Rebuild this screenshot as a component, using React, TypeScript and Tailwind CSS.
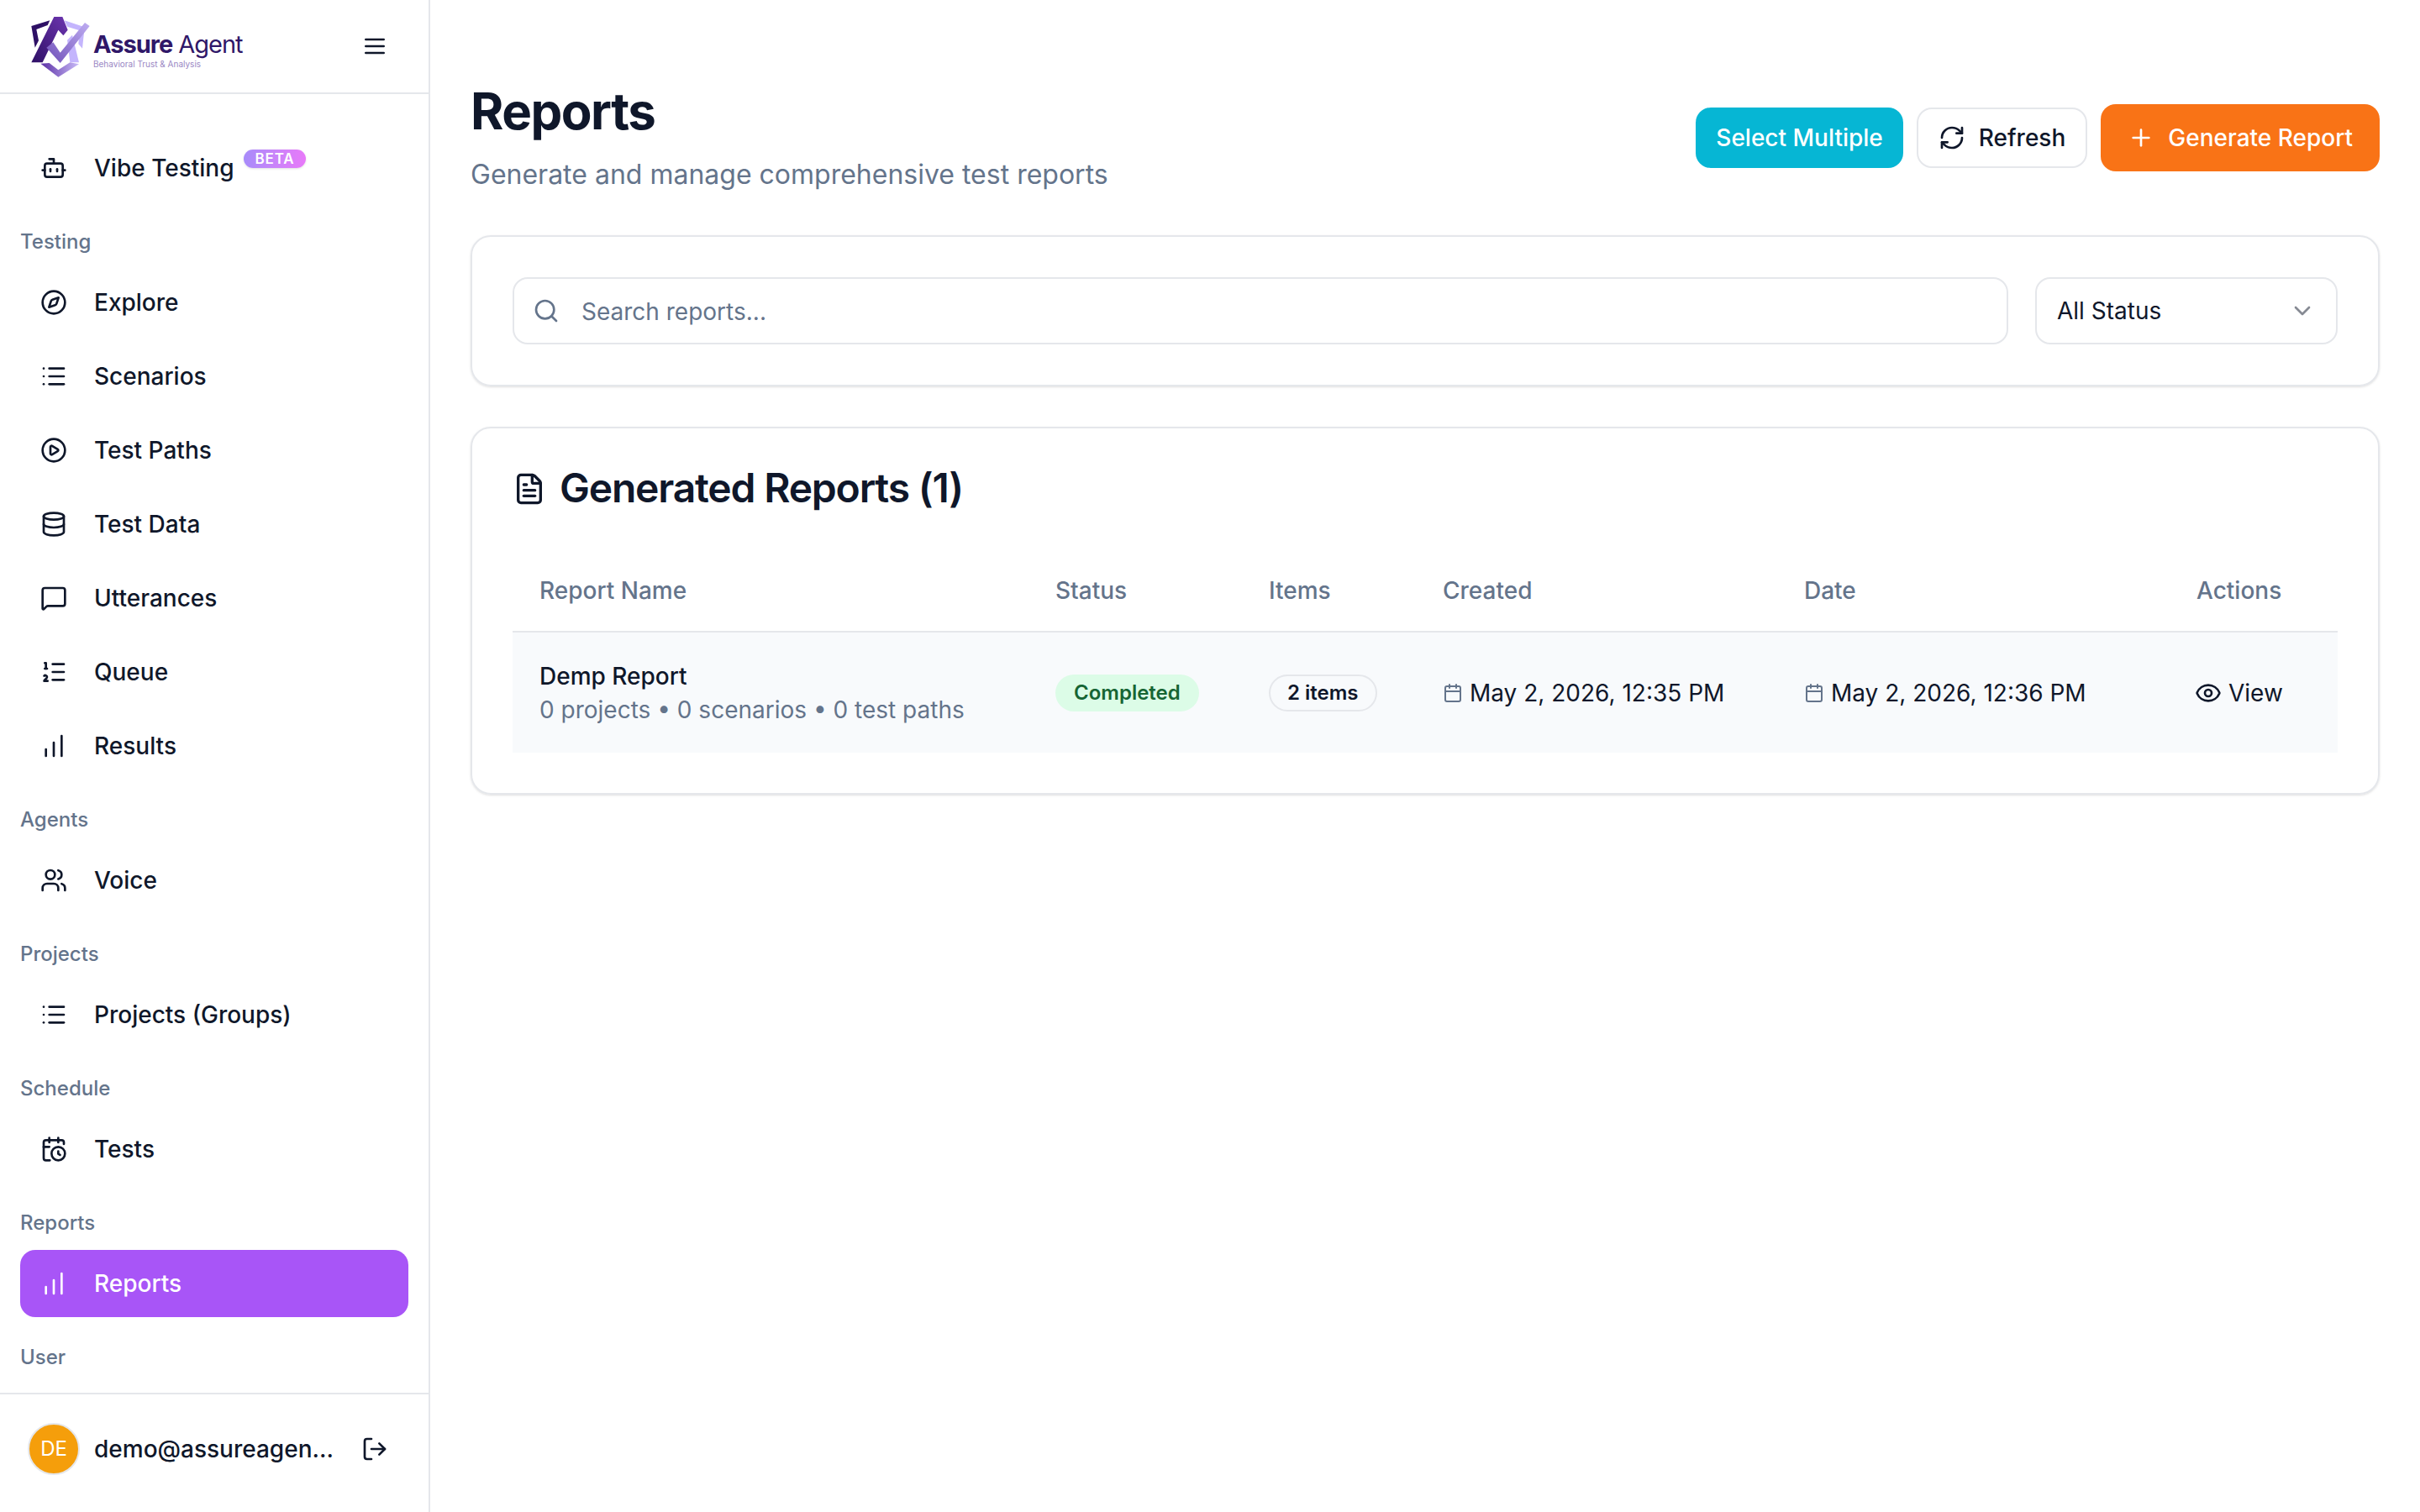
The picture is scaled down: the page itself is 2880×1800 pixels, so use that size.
import { Bot, Compass, List, CirclePlay, Database, MessageSquare, ListOrdered, ChartNoAxesColumnIncreasing, Users, CalendarClock, LogOut, RefreshCw, Plus, Search, ChevronDown, FileText, Calendar, Eye } from "lucide-react";
import type { ComponentType } from "react";

type IconT = ComponentType<{ className?: string; size?: number; strokeWidth?: number }>;

function Item({ icon: Icon, label, active }: { icon: IconT; label: string; active?: boolean }) {
  return (
    <div className={active ? "flex items-center h-20 mx-6 pl-6 rounded-[18px] bg-[#a855f7] text-white" : "flex items-center h-20 mx-6 pl-6 rounded-[18px] text-[#0f172a]"}>
      <Icon size={32} className="shrink-0" />
      <span className="ml-8 text-[28px] leading-none font-medium">{label}</span>
    </div>
  );
}

function Label({ children }: { children: string }) {
  return <div className="mt-6 mb-2 h-12 pl-6 flex items-center text-[24px] font-medium text-[#64748b]">{children}</div>;
}

function Logo() {
  return (
    <div className="flex items-center ml-[30px]">
      <svg viewBox="0 0 255 255" className="w-[85px] h-[85px] shrink-0 mt-[5px]">
        <defs>
          <linearGradient id="a" x1="0" y1="1" x2="1" y2="0"><stop offset="0" stopColor="#2e1065" /><stop offset="1" stopColor="#6d35b0" /></linearGradient>
          <linearGradient id="c" x1="0" y1="1" x2="1" y2="0"><stop offset="0" stopColor="#6f4fb8" /><stop offset="1" stopColor="#bfaef2" /></linearGradient>
          <linearGradient id="b" x1="0" y1="0" x2="1" y2="0"><stop offset="0" stopColor="#5b2fa5" /><stop offset="1" stopColor="#c9bbf8" /></linearGradient>
        </defs>
        <path d="M22 48 L88 28 L80 45 L40 60 L48 100 L35 125 Z" fill="#2e1065" />
        <path d="M140 28 L212 52 L204 128 L190 112 L194 64 L150 50 Z" fill="#c4b5fd" />
        <path d="M150 98 L168 80 L192 178 L160 178 Z" fill="#c4b5fd" />
        <path d="M103 15 L133 15 L152 62 L136 82 L118 62 L62 178 L22 178 Z" fill="url(#a)" />
        <path d="M76 125 L100 106 L125 143 L213 36 L230 48 L125 180 Z" fill="url(#c)" />
        <path d="M55 182 L118 230 L192 184 L160 178 L118 205 L86 180 Z" fill="url(#b)" />
      </svg>
      <div className="flex flex-col -ml-[4px] mt-[8px]">
        <div className="text-[29px] leading-[34px] tracking-[-0.035em] text-[#2f1768] whitespace-nowrap"><span className="font-bold">Assure</span> <span className="font-normal">Agent</span></div>
        <div className="text-[10px] leading-[12px] text-[#9a87c4] whitespace-nowrap">Behavioral Trust &amp; Analysis</div>
      </div>
    </div>
  );
}

function Th({ w, children }: { w: string; children: string }) {
  return <th className={`${w} h-[98px] pl-8 text-left font-medium text-[28px] text-[#64748b]`}>{children}</th>;
}

function DateCell({ text }: { text: string }) {
  return (
    <td className="pl-8">
      <div className="flex items-center gap-2">
        <Calendar size={24} className="text-[#64748b] shrink-0" />
        <span className="text-[28px] text-[#0f172a] whitespace-nowrap">{text}</span>
      </div>
    </td>
  );
}

export default function App() {
  return (
    <div className="flex h-[1800px] w-[2880px] overflow-hidden bg-white font-['Inter',sans-serif]">
      <aside className="w-[512px] shrink-0 h-full flex flex-col border-r-2 border-[#e5e7eb]">
        <div className="h-[112px] shrink-0 border-b-2 border-[#e5e7eb] flex items-center justify-between pr-[48px]">
          <Logo />
          <svg width="32" height="32" viewBox="0 0 24 24" fill="none" stroke="#0f172a" strokeWidth="2" strokeLinecap="round"><path d="M4 6h16M4 12h16M4 18h16" /></svg>
        </div>
        <div className="flex-1 overflow-hidden pt-[48px]">
          <div className="relative w-fit">
            <Item icon={Bot} label="Vibe Testing" />
            <span className="absolute left-[290px] top-[18px] w-[74px] h-[22px] rounded-full bg-gradient-to-r from-[#a78bfa] to-[#e879f9] text-white text-[17px] leading-[22px] font-semibold tracking-[0.05em] text-center shadow-sm">BETA</span>
          </div>
          <Label>Testing</Label>
          <div className="flex flex-col gap-2">
            <Item icon={Compass} label="Explore" />
            <Item icon={List} label="Scenarios" />
            <Item icon={CirclePlay} label="Test Paths" />
            <Item icon={Database} label="Test Data" />
            <Item icon={MessageSquare} label="Utterances" />
            <Item icon={ListOrdered} label="Queue" />
            <Item icon={ChartNoAxesColumnIncreasing} label="Results" />
          </div>
          <Label>Agents</Label>
          <Item icon={Users} label="Voice" />
          <Label>Projects</Label>
          <Item icon={List} label="Projects (Groups)" />
          <Label>Schedule</Label>
          <Item icon={CalendarClock} label="Tests" />
          <Label>Reports</Label>
          <Item icon={ChartNoAxesColumnIncreasing} label="Reports" active />
          <Label>User</Label>
        </div>
        <div className="h-[142px] shrink-0 border-t-2 border-[#e5e7eb] flex items-center pl-[33px] pr-[48px] pb-[10px]">
          <div className="w-[62px] h-[62px] rounded-full border-2 border-[#e5e7eb] bg-[#f59e0b] flex items-center justify-center text-white text-[24px] shrink-0">DE</div>
          <span className="ml-[17px] whitespace-nowrap text-[28px] font-medium text-[#0f172a]">demo@assureagen...</span>
          <LogOut size={32} className="ml-auto text-[#0f172a] shrink-0" />
        </div>
      </aside>
      <main className="flex-1 px-12 pt-[96px]">
        <div className="flex justify-between items-center">
          <div>
            <h1 className="text-[60px] leading-[72px] font-bold tracking-tight text-[#0f172a]">Reports</h1>
            <p className="mt-4 text-[32px] leading-[48px] text-[#64748b]">Generate and manage comprehensive test reports</p>
          </div>
          <div className="flex items-center gap-4">
            <button className="h-[72px] px-6 rounded-[18px] bg-[#06b6d4] text-white text-[28px] font-medium">Select Multiple</button>
            <button className="h-[72px] px-6 rounded-[18px] border-2 border-[#e5e7eb] bg-white text-[#0f172a] text-[28px] font-medium flex items-center gap-4"><RefreshCw size={32} />Refresh</button>
            <button className="h-20 px-8 rounded-[18px] bg-[#f97316] text-white text-[28px] font-medium flex items-center gap-4"><Plus size={32} />Generate Report</button>
          </div>
        </div>
        <section className="mt-12 h-[180px] rounded-[24px] border-2 border-[#e5e7eb] shadow-sm p-12 flex gap-8">
          <div className="flex-1 h-20 rounded-[18px] border-2 border-[#e5e7eb] flex items-center pl-6">
            <Search size={32} className="text-[#64748b] -ml-[2px]" />
            <span className="ml-[26px] text-[28px] text-[#64748b] mt-[2px]">Search reports...</span>
          </div>
          <div className="w-[360px] h-20 rounded-[18px] border-2 border-[#e5e7eb] flex items-center justify-between pl-6 pr-6">
            <span className="text-[28px] text-[#0f172a]">All Status</span>
            <ChevronDown size={32} className="text-[#0f172a] opacity-50" />
          </div>
        </section>
        <section className="mt-12 rounded-[24px] border-2 border-[#e5e7eb] shadow-sm px-12 pb-12">
          <div className="h-[144px] flex items-center gap-4">
            <FileText size={40} className="text-[#0f172a]" />
            <h2 className="text-[48px] font-semibold tracking-tight text-[#0f172a] -mt-[2px]">Generated Reports (1)</h2>
          </div>
          <table className="w-full table-fixed border-collapse">
            <thead>
              <tr className="border-b-2 border-[#e5e7eb]">
                <Th w="w-[614px]">Report Name</Th>
                <Th w="w-[254px]">Status</Th>
                <Th w="w-[207px]">Items</Th>
                <Th w="w-[430px]">Created</Th>
                <Th w="w-[467px]">Date</Th>
                <Th w="w-[200px]">Actions</Th>
              </tr>
            </thead>
            <tbody>
              <tr className="bg-[#f8fafc] h-[144px]">
                <td className="pl-8">
                  <div className="text-[28px] leading-[40px] font-medium text-[#0f172a]">Demp Report</div>
                  <div className="text-[28px] leading-[40px] text-[#64748b]">0 projects • 0 scenarios • 0 test paths</div>
                </td>
                <td className="pl-8"><span className="inline-flex items-center h-11 px-[22px] rounded-full bg-[#dcfce7] text-[#166534] text-[24px] font-semibold">Completed</span></td>
                <td className="pl-8"><span className="inline-flex items-center h-11 px-[20px] rounded-full border-2 border-[#e5e7eb] text-[#0f172a] text-[24px] font-semibold">2 items</span></td>
                <DateCell text="May 2, 2026, 12:35 PM" />
                <DateCell text="May 2, 2026, 12:36 PM" />
                <td className="pl-8">
                  <div className="flex items-center gap-2 -ml-[2px] text-[28px] font-normal text-[#0f172a]"><Eye size={32} />View</div>
                </td>
              </tr>
            </tbody>
          </table>
        </section>
      </main>
    </div>
  );
}
